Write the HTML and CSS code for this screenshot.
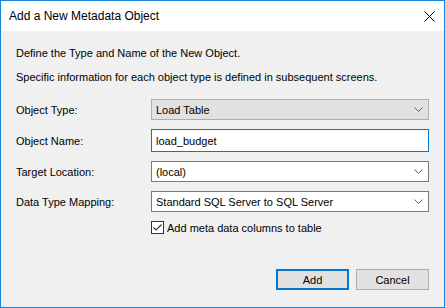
FILE: index.html
```html
<!DOCTYPE html>
<html lang="en">
<head>
  <meta charset="UTF-8" />
  <title>Add a New Metadata Object</title>
  <link rel="stylesheet" href="styles.css">
</head>
<body>
  <div class="window">
    <div class="titlebar">
      <span class="title">Add a New Metadata Object</span>
      <svg class="close" viewBox="0 0 11 11" width="11" height="11">
        <path d="M0.5 0.5 L10.5 10.5 M10.5 0.5 L0.5 10.5" stroke="#000" stroke-width="1" fill="none"/>
      </svg>
    </div>

    <div class="dialog">
      <p class="intro">Define the Type and Name of the New Object.</p>
      <p class="intro second">Specific information for each object type is defined in subsequent screens.</p>

      <div class="form">
        <label class="lbl">Object Type:</label>
        <div class="combo locked">
          <span>Load Table</span>
          <svg class="chev" viewBox="0 0 9 5" width="9" height="5"><path d="M0.5 0.5 L4.5 4.5 L8.5 0.5" stroke="#606060" fill="none"/></svg>
        </div>

        <label class="lbl">Object Name:</label>
        <div class="textbox">load_budget</div>

        <label class="lbl">Target Location:</label>
        <div class="combo">
          <span>(local)</span>
          <svg class="chev" viewBox="0 0 9 5" width="9" height="5"><path d="M0.5 0.5 L4.5 4.5 L8.5 0.5" stroke="#606060" fill="none"/></svg>
        </div>

        <label class="lbl">Data Type Mapping:</label>
        <div class="combo">
          <span>Standard SQL Server to SQL Server</span>
          <svg class="chev" viewBox="0 0 9 5" width="9" height="5"><path d="M0.5 0.5 L4.5 4.5 L8.5 0.5" stroke="#606060" fill="none"/></svg>
        </div>

        <span></span>
        <label class="check">
          <span class="box">
            <svg viewBox="0 0 11 11" width="11" height="11"><path d="M1.5 5.5 L4 8 L9.5 2.5" stroke="#333" stroke-width="1.2" fill="none"/></svg>
          </span>
          Add meta data columns to table
        </label>
      </div>

      <div class="buttons">
        <button class="btn primary">Add</button>
        <button class="btn">Cancel</button>
      </div>
    </div>
  </div>
</body>
</html>
```

FILE: styles.css
```css
* {
  box-sizing: border-box;
}
body {
  margin: 0;
  font-family: "Liberation Sans", Arial, sans-serif;
  font-size: 11px;
  color: #000;
}
.window {
  width: 445px;
  height: 308px;
  border: 1px solid #1883d7;
  background: #f0f0f0;
  display: flex;
  flex-direction: column;
}
/* Title bar */
.titlebar {
  height: 30px;
  flex: none;
  background: #fff;
  display: flex;
  align-items: center;
  justify-content: space-between;
  padding: 0 9px 0 8px;
}
.title {
  font-size: 12px;
  line-height: 16px;
}
.close {
  display: block;
}
/* Content */
.dialog {
  flex: 1;
  padding: 14px 15px 0 15px;
}
.intro {
  margin: 0;
  line-height: 16px;
}
.intro.second {
  margin-top: 8px;
}
.form {
  display: grid;
  grid-template-columns: 135px 1fr;
  grid-template-rows: 21px 23px 21px 21px 13px;
  row-gap: 9px;
  align-items: center;
  margin-top: 14px;
}
.lbl {
  line-height: 16px;
}
.combo, .textbox {
  height: 100%;
  border: 1px solid #7a7a7a;
  background: #fff;
  display: flex;
  align-items: center;
  justify-content: space-between;
  padding: 0 5px 0 4px;
  line-height: 16px;
}
.combo.locked {
  background: #e1e1e1;
  border-color: #adadad;
}
.textbox {
  border-color: #0078d7;
}
.chev {
  display: block;
}
.check {
  display: flex;
  align-items: center;
  height: 13px;
  line-height: 16px;
}
.box {
  width: 13px;
  height: 13px;
  flex: none;
  border: 1px solid #333;
  background: #fff;
  display: flex;
  align-items: center;
  justify-content: center;
  margin-right: 3px;
}
.box svg {
  display: block;
}
/* Buttons */
.buttons {
  display: flex;
  justify-content: flex-end;
  gap: 7px;
  margin-top: 35px;
}
.btn {
  width: 73px;
  height: 21px;
  font-family: inherit;
  font-size: 11px;
  background: #e1e1e1;
  border: 1px solid #adadad;
  padding: 0;
  color: #000;
}
.btn.primary {
  border: 2px solid #0078d7;
}
```
